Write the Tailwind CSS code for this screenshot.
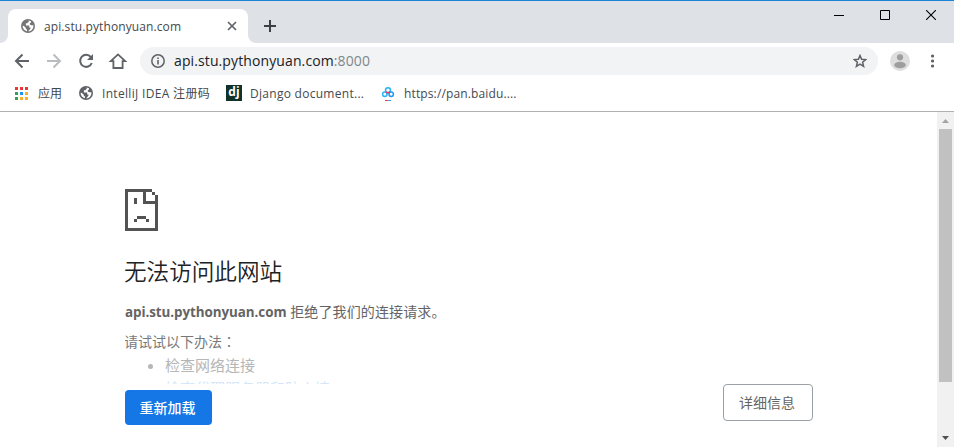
<!DOCTYPE html>
<html lang="zh-CN">
<head>
<meta charset="utf-8">
<title>api.stu.pythonyuan.com</title>
<script src="https://cdn.jsdelivr.net/npm/@tailwindcss/browser@4"></script>
</head>
<body class="w-[954px] h-[447px] overflow-hidden flex flex-col bg-white font-['Open_Sans','Noto_Sans_CJK_SC',sans-serif] whitespace-nowrap">
<svg class="hidden">
  <symbol id="globe" viewBox="0 0 14 14">
    <circle cx="7" cy="7" r="7" fill="currentColor"/>
    <path d="M7.600 1.600L7.800 2.800L6.200 4.300H4.900V6.600H8.200V8.600H9.500V9.500L7.200 12.400C10.300 12.300 12.400 9.900 12.400 7V6.200H10.200L8.800 5.400V4.300L10 3.500V2.300ZM1.600 6.800C1.600 9.800 3.500 11.800 6 12.300V10.300H5L4.700 8.800L2.900 7Z" fill="#fff"/>
  </symbol>
</svg>
<header class="h-[43px] bg-[#dee1e6] border-t border-[#1883d7] flex shrink-0">
  <div class="w-2 flex items-end overflow-hidden"><div class="size-2 bg-white"><div class="size-2 bg-[#dee1e6] rounded-br-lg"></div></div></div>
  <div class="w-[240px] mt-2 bg-white rounded-t-lg flex items-center pl-[13px] pr-[11px]">
    <svg class="size-[14px] text-[#757575]"><use href="#globe"/></svg>
    <span class="ml-[9px] pt-[2px] text-[12px] tracking-[0.1px] text-[#45494d] flex-1">api.stu.pythonyuan.com</span>
    <svg class="size-[10px]" viewBox="0 0 10 10" stroke="#5f6368" stroke-width="1.700"><path d="M1 1L9 9M9 1L1 9"/></svg>
  </div>
  <div class="w-2 flex items-end"><div class="size-2 bg-white"><div class="size-2 bg-[#dee1e6] rounded-bl-lg"></div></div></div>
  <svg class="size-3 ml-2 mt-[19px]" viewBox="0 0 12 12" stroke="#3c4043" stroke-width="2"><path d="M6 0V12M0 6H12"/></svg>
  <div class="flex ml-auto pr-[18px] pt-[9px] gap-9">
    <svg class="size-[10px]" viewBox="0 0 10 10"><path d="M0 5h10v1H0z"/></svg>
    <svg class="size-[10px]" viewBox="0 0 10 10" fill="none" stroke="#000"><path d="M.5 .5h9v9h-9z"/></svg>
    <svg class="size-[10px]" viewBox="0 0 10 10" stroke="#000" stroke-width="1.100"><path d="M0 0L10 10M10 0L0 10"/></svg>
  </div>
</header>
<nav class="h-9 shrink-0 flex items-center pl-[14px]">
  <svg class="w-[114px] h-9" viewBox="14 43 114 36" fill="none" stroke="#5f6368" stroke-width="2">
    <path d="M29 61H16.500M22.500 54.500L16 61L22.500 67.500"/>
    <path stroke="#babcbe" d="M47 61H59.500M53.500 54.500L60 61L53.500 67.500"/>
    <path d="M90.800 57A6 6 0 1 0 91.800 63"/><path d="M93 54V60H87Z" fill="#5f6368" stroke="none"/>
    <path stroke-width="1.800" d="M110.800 61.200H113.400V68H122.600V61.200H125.200L118 54.400Z"/>
  </svg>
  <div class="ml-3 w-[738px] h-7 rounded-full bg-[#f1f3f4] flex items-center pl-[11px] pr-[11px]">
    <svg class="size-[14px]" viewBox="0 0 14 14"><circle cx="7" cy="7" r="6.200" fill="none" stroke="#5f6368" stroke-width="1.500"/><path d="M6.200 3.500h1.600v1.600H6.200zM6.200 6h1.600v4.500H6.200z" fill="#5f6368"/></svg>
    <span class="ml-[9px] pb-[2px] text-[14px] tracking-[0.11px] text-[#202124] flex-1">api.stu.pythonyuan.com<span class="text-[#80868b]">:8000</span></span>
    <svg class="size-[14px]" viewBox="0 0 14 14" fill="none" stroke="#5f6368" stroke-width="1.500"><path d="M7 1.500L8.600 5.300L12.700 5.600L9.600 8.300L10.600 12.400L7 10.200L3.400 12.400L4.400 8.300L1.300 5.600L5.400 5.300Z"/></svg>
  </div>
  <svg class="size-5 ml-3" viewBox="0 0 20 20"><circle cx="10" cy="10" r="10" fill="#dedede"/><circle cx="10" cy="6.300" r="3.100" fill="#9e9e9e"/><ellipse cx="10" cy="14" rx="5.800" ry="3.200" fill="#9e9e9e"/></svg>
  <svg class="w-1 h-[14px] ml-[20px]" viewBox="0 0 4 14" fill="#5f6368"><circle cx="2.500" cy="2" r="1.600"/><circle cx="2.500" cy="7" r="1.600"/><circle cx="2.500" cy="12" r="1.600"/></svg>
</nav>
<div class="h-[33px] shrink-0 border-b border-[#b0b0b0] flex items-center pl-[15px] pb-1 text-[12px] text-[#45494d]">
  <svg class="size-[13px]" viewBox="0 0 13 13"><path fill="#ea3535" d="M0 0h3v3H0zM5 0h3v3H5zM10 0h3v3h-3z"/><path fill="#34a05a" d="M0 5h3v3H0zM0 10h3v3H0z"/><path fill="#2094f3" d="M5 5h3v3H5z"/><path fill="#f6ae2d" d="M10 5h3v3h-3zM5 10h3v3H5zM10 10h3v3h-3z"/></svg>
  <span class="ml-[10px] pt-[2px] w-[41px]">应用</span>
  <svg class="size-[14px] text-[#5f6368]"><use href="#globe"/></svg>
  <span class="ml-[9px] pt-[2px] w-[124px] tracking-[0.32px]">IntelliJ IDEA 注册码</span>
  <span class="size-4 bg-[#113228] text-white text-[12px] leading-[13px] font-bold text-center">dj</span>
  <span class="ml-2 pt-[2px] w-[130px] tracking-[0.28px]">Django document...</span>
  <svg class="size-4" viewBox="0 0 16 16" fill="none" stroke-width="1.500"><circle cx="8" cy="5.300" r="2.500" stroke="#27b5f5"/><circle cx="4.800" cy="9.300" r="2.200" stroke="#27b5f5"/><circle cx="11.200" cy="9.300" r="2.200" stroke="#2497ef"/><path d="M6 6.800L8 7.800L10 6.800" stroke="#e8395a"/><path d="M5 15.500h3.500" stroke="#e8395a" stroke-width="1"/><path d="M8.500 15.500h2.500" stroke="#27a5ee" stroke-width="1"/></svg>
  <span class="ml-2 pt-[2px] tracking-[0.13px]">https://pan.baidu....</span>
</div>
<div class="flex flex-1 min-h-0">
  <main class="flex-1 pl-[125px] pt-[77px] text-[#646464]">
    <svg class="w-[33px] h-[42px]" viewBox="0 0 33 42" fill="#535353" shape-rendering="crispEdges"><path d="M0 0h27v3H3v36h27V15H18V0h3v12h9V6h3v36H0zM27 3h3v3h-3zM9 9h3v6H9zM12 27h9v3h-9zM9 30h3v3H9zM21 30h3v3h-3z"/></svg>
    <h1 class="mt-[25px] -ml-px h-[30px] leading-[30px] text-[22.600px] text-[#202124] font-['Noto_Sans_CJK_SC',sans-serif] font-[350]">无法访问此网站</h1>
    <p class="mt-[16px] h-5 leading-5 text-[14px] tracking-[0.12px]"><b class="text-[13.400px] tracking-[-0.06px]">api.stu.pythonyuan.com</b> 拒绝了我们的连接请求。</p>
    <div class="mt-[9px] h-[53px] overflow-hidden">
      <p class="h-5 leading-5 text-[14px] text-[#77797c] -ml-px">请试试以下办法<span class="font-['Noto_Sans_CJK_TC']" lang="zh-TW">：</span></p>
      <ul class="pl-10 text-[15px] leading-6 mt-[2px] list-disc text-[#b4b6b8]"><li>检查网络连接</li><li class="marker:text-transparent text-[#d5e6fa] -mt-px">检查代理服务器和防火墙</li></ul>
    </div>
    <div class="flex w-[688px] justify-between">
      <button class="mt-[6px] w-[87px] h-[35px] rounded bg-[#1577e6] text-white text-[14px] font-medium pr-[2px]">重新加载</button>
      <button class="w-[90px] h-[37px] rounded border border-[#9aa0a6] text-[14px] pr-[2px]">详细信息</button>
    </div>
  </main>
  <aside class="w-[17px] bg-[#f1f1f1] flex flex-col items-center">
    <svg class="w-[17px] h-[17px]" viewBox="0 0 17 17"><path d="M5 11H12L8.500 7Z" fill="#a3a3a3"/></svg>
    <div class="w-[13px] h-[253px] bg-[#c1c1c1]"></div>
    <svg class="w-[17px] h-[17px] mt-auto" viewBox="0 0 17 17"><path d="M5 6H12L8.500 10Z" fill="#505050"/></svg>
  </aside>
</div>
</body>
</html>
